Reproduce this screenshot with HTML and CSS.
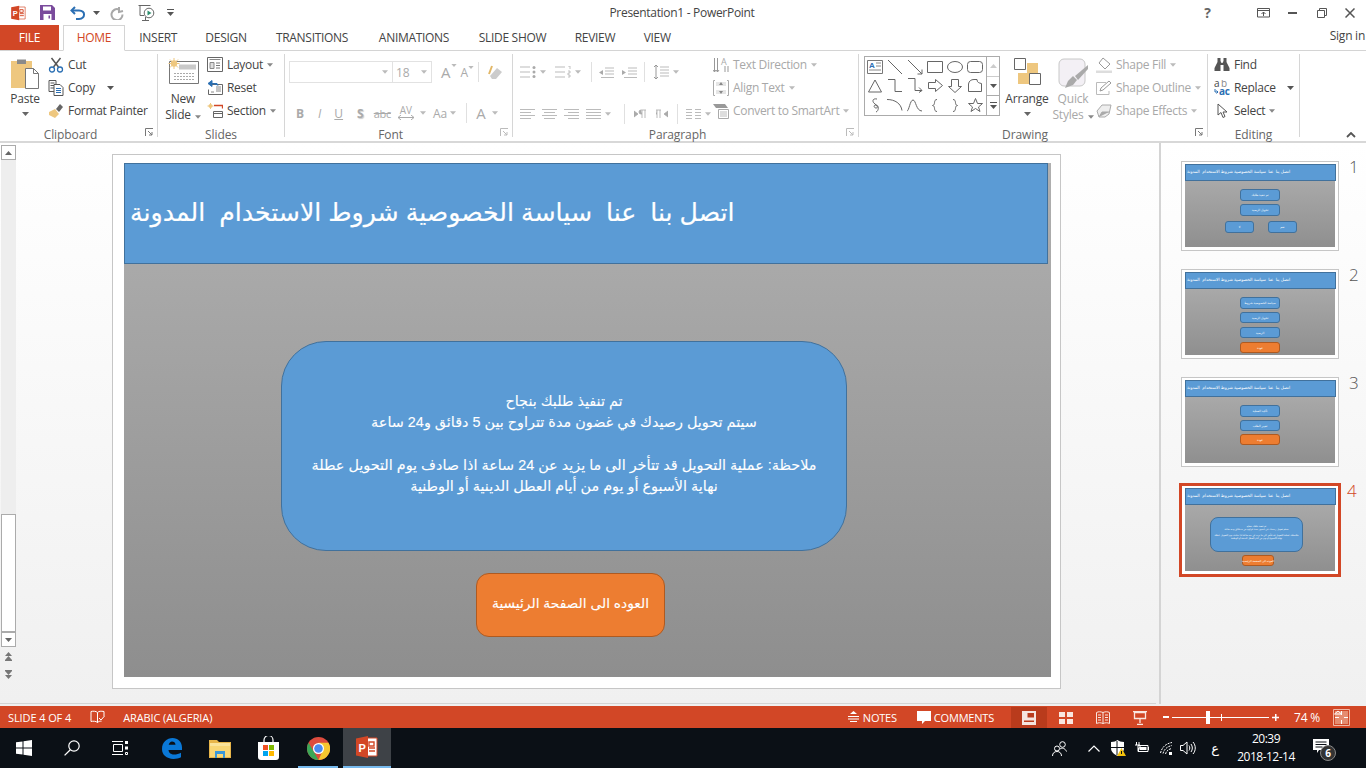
FILE: index.html
```html
<!DOCTYPE html>
<html lang="en">
<head>
<meta charset="utf-8">
<title>Presentation1 - PowerPoint</title>
<link rel="stylesheet" href="styles.css">
</head>
<body>
<svg class="defs" width="0" height="0">
  <symbol id="caret" viewBox="0 0 7 4"><path d="M0 0h7L3.500 4z" fill="currentColor"/></symbol>
  <symbol id="launch" viewBox="0 0 9 9"><path d="M.5 8V.5H8M3 3l4 4M7 4v3H4" fill="none" stroke="currentColor"/></symbol>
  <symbol id="ppt" viewBox="0 0 24 24"><path d="M11 3h11v18H11z" fill="#fff" stroke="#d24726"/><path d="M14 7h5v4h-5zM14 13h6M14 16h6" fill="none" stroke="#d24726" stroke-width="1.400"/><path d="M1 3.500 13 1v22L1 20.500z" fill="#d24726"/><text x="3.500" y="16.500" class="ptext">P</text></symbol>
</svg>
<div class="window">
  <header class="titlebar">
    <div class="qat">
      <svg class="q-logo" width="17" height="16" viewBox="0 0 24 24"><use href="#ppt"/></svg>
      <svg class="q-save" width="15" height="15" viewBox="0 0 15 15"><path d="M0 0h12l3 3v12H0z" fill="#7a4b9c"/><path d="M3 1.500h8v4H3z" fill="#fff"/><path d="M3.500 9h8v6h-8z" fill="#fff"/><path d="M8.500 10.500h1.500v3H8.500z" fill="#7a4b9c"/></svg>
      <svg class="q-undo" width="16" height="14" viewBox="0 0 16 14"><path d="M5 1 1.500 4.500 5 8" fill="none" stroke="#2b6fb3" stroke-width="2"/><path d="M2 4.500h7c7 0 6.500 8 0 8.500H6" fill="none" stroke="#2b6fb3" stroke-width="2"/></svg>
      <svg class="q-caret1 c-dark" width="7" height="4"><use href="#caret"/></svg>
      <svg class="q-redo" width="14" height="14" viewBox="0 0 14 14"><path d="M9 1v5l4-1M9 3.500a5.500 5.500 0 1 0 3.500 5" fill="none" stroke="#a8a8a8" stroke-width="2"/></svg>
      <svg class="q-show" width="17" height="17" viewBox="0 0 17 17"><path d="M.5 1.500h12M2 1.500v10h4M4 16.500h7M7.500 13v3.500" fill="none" stroke="#666"/><circle cx="11" cy="9" r="4.800" fill="#fff" stroke="#666"/><path d="M9.500 6.500v5l4-2.500z" fill="#2f8f6f"/></svg>
      <svg class="q-custom" width="7" height="7" viewBox="0 0 7 7"><path d="M0 0h7v1H0zM0 3h7L3.500 7z" fill="#555"/></svg>
    </div>
    <div class="doc-title">Presentation1 - PowerPoint</div>
    <div class="winctl">
      <span class="help">?</span>
      <svg width="13" height="10" viewBox="0 0 13 10"><path d="M.5.500h12v8.500H.5zM.5 2.500h12M6.500 8V4M4.500 6l2-2 2 2" fill="none" stroke="#555"/></svg>
      <svg class="w-min" width="9" height="2" viewBox="0 0 9 2"><path d="M0 0h9v2H0z" fill="#555"/></svg>
      <svg width="10" height="10" viewBox="0 0 10 10"><path d="M.5 2.500h7v7h-7zM2.500 2.500V.5h7v7h-2" fill="none" stroke="#555"/></svg>
      <svg width="10" height="10" viewBox="0 0 10 10"><path d="M.5.500l9 9M9.500.500l-9 9" fill="none" stroke="#555" stroke-width="1.500"/></svg>
    </div>
  </header>

  <nav class="tabs">
    <div class="tabgrid">
      <div class="tab file">FILE</div>
      <div class="tab active">HOME</div>
      <div class="tab">INSERT</div>
      <div class="tab">DESIGN</div>
      <div class="tab">TRANSITIONS</div>
      <div class="tab">ANIMATIONS</div>
      <div class="tab">SLIDE SHOW</div>
      <div class="tab">REVIEW</div>
      <div class="tab">VIEW</div>
    </div>
    <div class="signin">Sign in</div>
  </nav>

  <section class="ribbon">
    <div class="group g-clip">
      <div class="gbody">
        <div class="big big-paste">
          <svg width="30" height="31" viewBox="0 0 30 31"><path d="M1 3h21v27H1z" fill="#eec77f"/><path d="M7 1.500h9V6H7z" fill="#8a8a8a"/><path d="M15.500 10.500h8l5 5v15h-13z" fill="#fff" stroke="#777"/><path d="M23.500 10.500v5h5" fill="none" stroke="#777"/></svg>
          <span class="biglabel">Paste</span>
          <svg class="bigcaret" width="7" height="4"><use href="#caret"/></svg>
        </div>
        <div class="col col-clip">
          <div class="row"><svg class="ico" width="15" height="16" viewBox="0 0 15 16"><path d="M3 1l7 9M12 1 5 10" stroke="#555" stroke-width="1.500" fill="none"/><circle cx="3.500" cy="12.500" r="2.500" fill="none" stroke="#2b6fb3" stroke-width="1.300"/><circle cx="11.500" cy="12.500" r="2.500" fill="none" stroke="#2b6fb3" stroke-width="1.300"/></svg><span>Cut</span></div>
          <div class="row"><svg class="ico" width="15" height="16" viewBox="0 0 15 16"><path d="M.5.500h7v11h-7zM2 3h4M2 5.500h4M2 8h4" fill="none" stroke="#555"/><path d="M5.500 4.500h6l3 3v8h-9z" fill="#fff" stroke="#555"/><path d="M7.500 8.500h5M7.500 10.500h5M7.500 12.500h5" stroke="#2b6fb3"/></svg><span>Copy</span><svg class="car c-dark car-copy" width="7" height="4"><use href="#caret"/></svg></div>
          <div class="row"><svg class="ico" width="16" height="16" viewBox="0 0 16 16"><path d="M1 9l6-3 4 5-4 4-6-3z" fill="#eec77f"/><path d="M8 6l4-5 3 3-4 5z" fill="#666"/></svg><span>Format Painter</span></div>
        </div>
      </div>
      <div class="glabel">Clipboard</div>
      <svg class="launcher" width="9" height="9"><use href="#launch"/></svg>
    </div>

    <div class="group g-slides">
      <div class="gbody">
        <div class="big big-new">
          <svg width="31" height="27" viewBox="0 0 31 27"><path d="M1.500 3.500h29v22h-29z" fill="#fff" stroke="#777"/><path d="M11 6.500h17v5H11z" fill="#c9c9c9"/><path d="M6 15.500h20M6 18.500h20M6 21.500h20" stroke="#aaa" stroke-dasharray="2 1"/><circle cx="6" cy="5.500" r="3.200" fill="#eec77f"/><path d="M6 0v11M.5 5.500h11M2 1.500l8 8M10 1.500l-8 8" stroke="#eec77f"/></svg>
          <span class="biglabel">New</span>
          <span class="biglabel l2">Slide<svg class="car" width="6" height="4"><use href="#caret"/></svg></span>
        </div>
        <div class="col col-slides">
          <div class="row"><svg class="ico" width="16" height="15" viewBox="0 0 16 15"><path d="M.5.500h15v14H.5z" fill="#fff" stroke="#666"/><path d="M2.500 2.500h11M3 5.500h4v6H3z" stroke="#888" fill="#ddd"/><path d="M9 6h4M9 8.500h4M9 11h4" stroke="#777"/></svg><span>Layout</span><svg class="car" width="6" height="4"><use href="#caret"/></svg></div>
          <div class="row"><svg class="ico" width="16" height="15" viewBox="0 0 16 15"><path d="M3.500 4.500h12v10h-14v-5" fill="#fff" stroke="#666"/><path d="M9 7h5M9 9h5M9 11h5M4 12h3" stroke="#888"/><path d="M5 .5 1 3.500l4 3zM4 3.500h6l1 2" fill="#2b6fb3" stroke="#2b6fb3"/></svg><span>Reset</span></div>
          <div class="row"><svg class="ico" width="16" height="15" viewBox="0 0 16 15"><circle cx="3.500" cy="3" r="2" fill="#eec77f"/><path d="M3.500 0v6M.5 3h6" stroke="#eec77f"/><path d="M7 2.500h8.500v3" fill="none" stroke="#d24726" stroke-width="1.300"/><path d="M6.500 8.500h9v6h-9zM6.500 10.500h9" fill="#fff" stroke="#666"/></svg><span>Section</span><svg class="car" width="6" height="4"><use href="#caret"/></svg></div>
        </div>
      </div>
      <div class="glabel">Slides</div>
    </div>

    <div class="group g-font dis">
      <div class="gbody stack">
        <div class="fontrow">
          <div class="select s-font"><svg class="car" width="6" height="4"><use href="#caret"/></svg></div>
          <div class="select s-size"><span>18</span><svg class="car" width="6" height="4"><use href="#caret"/></svg></div>
          <span class="ga big-a">A<svg class="tinyc" width="6" height="3"><use href="#caret"/></svg></span>
          <span class="ga small-a">A<svg class="tinyc" width="6" height="3"><use href="#caret"/></svg></span>
          <i class="vsep v1"></i>
          <svg class="eraser" width="15" height="15" viewBox="0 0 15 15"><path d="M2 11 9 3l5 4-6 7H4z" fill="#ccc"/><path d="M4 1 1 9" stroke="#e2b766" stroke-width="2"/></svg>
        </div>
        <div class="fontrow lower">
          <b class="fb f-b">B</b><i class="fb f-i">I</i><u class="fb f-u">U</u><b class="fb f-s">S</b><s class="fb f-abc">abc</s>
          <span class="fb f-av">AV<svg width="16" height="5" viewBox="0 0 16 5"><path d="M0 2.500h16M3 0 0 2.500 3 5M13 0l3 2.500L13 5" fill="none" stroke="currentColor"/></svg></span>
          <svg class="car c-av" width="6" height="4"><use href="#caret"/></svg>
          <span class="fb f-aa">Aa</span><svg class="car c-aa" width="6" height="4"><use href="#caret"/></svg>
          <i class="vsep v2"></i>
          <span class="fb f-a">A</span><svg class="car c-a" width="6" height="4"><use href="#caret"/></svg>
        </div>
      </div>
      <div class="glabel">Font</div>
      <svg class="launcher" width="9" height="9"><use href="#launch"/></svg>
    </div>

    <div class="group g-para dis">
      <div class="gbody">
        <div class="stack para-left">
          <div class="pararow">
            <svg class="p1" width="16" height="12" viewBox="0 0 16 12"><path d="M0 1h10M0 6h10M0 11h10" stroke="#bbb"/><circle cx="14" cy="1.500" r="1.500" fill="#aaa"/><circle cx="14" cy="6" r="1.500" fill="#aaa"/><circle cx="14" cy="10.500" r="1.500" fill="#aaa"/></svg>
            <svg class="car" width="6" height="4"><use href="#caret"/></svg>
            <svg class="p2" width="16" height="12" viewBox="0 0 16 12"><path d="M0 1h10M0 6h10M0 11h10" stroke="#bbb"/><path d="M13 0h2v3M13 5h2v2h-2v2M13 9h2v2h-2" fill="none" stroke="#aaa" stroke-width=".7"/></svg>
            <svg class="car" width="6" height="4"><use href="#caret"/></svg>
            <i class="vsep v3"></i>
            <svg class="p3" width="15" height="11" viewBox="0 0 15 11"><path d="M6 1h9M6 4h9M6 7h9M2 10.500h13" stroke="#bbb"/><path d="M4 3 0 5.500 4 8z" fill="#aaa"/></svg>
            <svg class="p4" width="15" height="11" viewBox="0 0 15 11"><path d="M6 1h9M6 4h9M6 7h9M2 10.500h13" stroke="#bbb"/><path d="M0 3l4 2.500L0 8z" fill="#aaa"/></svg>
            <i class="vsep v4"></i>
            <svg class="p5" width="16" height="16" viewBox="0 0 16 16"><path d="M7 3h9M7 6h9M7 9h9M7 12h9" stroke="#bbb"/><path d="M3 1v14M1 3l2-2 2 2M1 13l2 2 2-2" fill="none" stroke="#999"/></svg>
            <svg class="car" width="6" height="4"><use href="#caret"/></svg>
          </div>
          <div class="pararow lower">
            <svg class="al" width="15" height="11" viewBox="0 0 15 11"><path d="M0 .5h15M0 3.500h11M0 6.500h15M0 9.500h11" stroke="#bbb"/></svg>
            <svg class="al" width="15" height="11" viewBox="0 0 15 11"><path d="M0 .5h15M2 3.500h11M0 6.500h15M2 9.500h11" stroke="#bbb"/></svg>
            <svg class="al" width="15" height="11" viewBox="0 0 15 11"><path d="M0 .5h15M4 3.500h11M0 6.500h15M4 9.500h11" stroke="#bbb"/></svg>
            <svg class="al" width="15" height="11" viewBox="0 0 15 11"><path d="M0 .5h15M0 3.500h15M0 6.500h15M0 9.500h15" stroke="#bbb"/></svg>
            <svg class="car" width="6" height="4"><use href="#caret"/></svg>
            <i class="vsep v5"></i>
            <svg class="rt" width="12" height="10" viewBox="0 0 12 10"><path d="M0 2l4 3-4 3zM7 1h5M8 1v8M11 1v8M7 1a2 2 0 0 0 0 4h1" fill="#aaa" stroke="#aaa" stroke-width=".8"/></svg>
            <svg class="lt" width="12" height="10" viewBox="0 0 12 10"><path d="M12 2 8 5l4 3zM0 1h5M1 1v8M4 1v8M0 1a2 2 0 0 0 0 4h1" fill="#aaa" stroke="#aaa" stroke-width=".8"/></svg>
            <i class="vsep v6"></i>
            <svg class="cols" width="15" height="11" viewBox="0 0 15 11"><path d="M0 .5h6M9 .5h6M0 3.500h6M9 3.500h6M0 6.500h6M9 6.500h6M0 9.500h6M9 9.500h6" stroke="#bbb"/></svg>
            <svg class="car" width="6" height="4"><use href="#caret"/></svg>
          </div>
        </div>
        <div class="col col-text">
          <div class="row"><svg class="ico" width="16" height="16" viewBox="0 0 16 16"><path d="M1.500 1v14M4.500 1v14M12 9v6M15 9v6M0 13l1.500 2L3 13M3 13l1.500 2L6 13" fill="none" stroke="#999"/><text x="8" y="8" class="tx">A</text></svg><span>Text Direction</span><svg class="car" width="6" height="4"><use href="#caret"/></svg></div>
          <div class="row"><svg class="ico" width="16" height="16" viewBox="0 0 16 16"><path d="M2 .5H.5v15H2M14 .5h1.500v15H14" fill="none" stroke="#aaa"/><path d="M3 3h10M3 5h10M3 11h10M3 13h10" stroke="#ccc"/><path d="M8 2l2 3H6zM8 14l2-3H6z" fill="#888"/></svg><span>Align Text</span><svg class="car" width="6" height="4"><use href="#caret"/></svg></div>
          <div class="row"><svg class="ico" width="16" height="16" viewBox="0 0 16 16"><path d="M0 1h12l3 4H3z" fill="#999"/><path d="M5.500 6.500h10v9h-10z" fill="#fff" stroke="#aaa"/><path d="M7 9h7M7 11h7M7 13h7" stroke="#bbb"/></svg><span>Convert to SmartArt</span><svg class="car" width="6" height="4"><use href="#caret"/></svg></div>
        </div>
      </div>
      <div class="glabel">Paragraph</div>
      <svg class="launcher" width="9" height="9"><use href="#launch"/></svg>
    </div>

    <div class="group g-draw">
      <div class="gbody">
        <div class="gallery">
          <div class="shapes">
            <svg width="16" height="14" viewBox="0 0 16 14"><path d="M.5.500h15v13H.5z" fill="#fff" stroke="#777"/><text x="2" y="7.500" class="sa">A</text><path d="M9 3h5M9 6h5M2 10h12" stroke="#888"/></svg>
            <svg width="16" height="16" viewBox="0 0 16 16"><path d="M1 1l14 14" stroke="#666"/></svg>
            <svg width="16" height="16" viewBox="0 0 16 16"><path d="M1 1l14 14M10.500 15H15v-4.500" fill="none" stroke="#666"/></svg>
            <svg width="16" height="12" viewBox="0 0 16 12"><path d="M.5.500h15v11H.5z" fill="none" stroke="#666"/></svg>
            <svg width="16" height="12" viewBox="0 0 16 12"><ellipse cx="8" cy="6" rx="7.500" ry="5.500" fill="none" stroke="#666"/></svg>
            <svg width="16" height="12" viewBox="0 0 16 12"><rect x=".5" y=".5" width="15" height="11" rx="3" fill="none" stroke="#666"/></svg>
            <svg width="14" height="14" viewBox="0 0 14 14"><path d="M7 1l6.500 12H.5z" fill="none" stroke="#666"/></svg>
            <svg width="16" height="13" viewBox="0 0 16 13"><path d="M1 .5h7v12h7" fill="none" stroke="#666"/></svg>
            <svg width="16" height="15" viewBox="0 0 16 15"><path d="M1 .5h7v12h7M12 9.500l3 3-3 2" fill="none" stroke="#666"/></svg>
            <svg width="15" height="13" viewBox="0 0 15 13"><path d="M.5 3.500h7V.5l7 6-7 6v-3h-7z" fill="none" stroke="#666"/></svg>
            <svg width="14" height="14" viewBox="0 0 14 14"><path d="M3.500.5h7v7h3L7 13.500.5 7.500h3z" fill="none" stroke="#666"/></svg>
            <svg width="14" height="13" viewBox="0 0 14 13"><path d="M.5 5C1 2 3 .5 6 .5h3c0 3 2 3.500 4.500 4v8H.5z" fill="none" stroke="#666"/></svg>
            <svg width="9" height="15" viewBox="0 0 9 15"><path d="M6 1C1 0 1 4 4 6s3 4 1 4-3-3 0-3 3 6 0 7" fill="none" stroke="#666"/></svg>
            <svg width="16" height="12" viewBox="0 0 16 12"><path d="M0 .5c8 0 14 4 15 11" fill="none" stroke="#666"/></svg>
            <svg width="16" height="13" viewBox="0 0 16 13"><path d="M0 12C2 12 3 1 6 1s3 11 9 11" fill="none" stroke="#666"/></svg>
            <svg width="6" height="13" viewBox="0 0 6 13"><path d="M5 .5C1 .5 4 6 .5 6.500 4 7 1 12.500 5 12.500" fill="none" stroke="#666"/></svg>
            <svg width="6" height="13" viewBox="0 0 6 13"><path d="M1 .5C5 .5 2 6 5.500 6.500 2 7 5 12.500 1 12.500" fill="none" stroke="#666"/></svg>
            <svg width="15" height="14" viewBox="0 0 15 14"><path d="M7.500.5l2 5h5l-4 3.500 1.500 4.500-4.500-3-4.500 3L4.500 9l-4-3.500h5z" fill="none" stroke="#666"/></svg>
          </div>
          <div class="gscroll">
            <span class="gs off"><svg width="7" height="4" viewBox="0 0 7 4"><path d="M3.500 0 7 4H0z" fill="#ccc"/></svg></span>
            <span class="gs"><svg width="7" height="4"><use href="#caret"/></svg></span>
            <span class="gs"><svg width="7" height="7" viewBox="0 0 7 7"><path d="M0 0h7v1H0zM0 3h7L3.500 7z" fill="#555"/></svg></span>
          </div>
        </div>
        <div class="big big-arr">
          <svg width="27" height="27" viewBox="0 0 27 27"><path d="M13 5h11v11H13zM4 15h11v11H4z" fill="#eec77f"/><path d="M.5.500h11v11H.5zM15.500 15.500h11v11h-11z" fill="#fff" stroke="#666"/></svg>
          <span class="biglabel">Arrange</span>
          <svg class="bigcaret" width="7" height="4"><use href="#caret"/></svg>
        </div>
        <div class="big big-qs">
          <svg width="31" height="31" viewBox="0 0 31 31"><rect x="1" y="1" width="26" height="27" rx="5" fill="#f3f0f5" stroke="#c8c8c8"/><path d="M10 23l5-5 4 4-4 5-8 3z" fill="#aaa"/><path d="M17 18 30 7v4L20 22z" fill="#aaa"/></svg>
          <span class="biglabel">Quick</span>
          <span class="biglabel l2">Styles<svg class="car" width="6" height="4"><use href="#caret"/></svg></span>
        </div>
        <div class="col col-shape dis">
          <div class="row"><svg class="ico" width="16" height="16" viewBox="0 0 16 16"><path d="M7 1l7 6-5 5-6-6z" fill="#fff" stroke="#999"/><path d="M0 13.500h16V16H0z" fill="#ddd"/></svg><span>Shape Fill</span><svg class="car" width="6" height="4"><use href="#caret"/></svg></div>
          <div class="row"><svg class="ico" width="16" height="16" viewBox="0 0 16 16"><path d="M13 11v3.500H.5v-12H10" fill="none" stroke="#bbb"/><path d="M4 11l1-3 8-7 2 2-8 7z" fill="#fff" stroke="#999"/></svg><span>Shape Outline</span><svg class="car" width="6" height="4"><use href="#caret"/></svg></div>
          <div class="row"><svg class="ico" width="16" height="16" viewBox="0 0 16 16"><path d="M1 8l5-6h9l-2 9-4 3H3z" fill="#eee" stroke="#aaa"/><path d="M3 14l3-5h7" fill="#aaa" stroke="#aaa"/></svg><span>Shape Effects</span><svg class="car" width="6" height="4"><use href="#caret"/></svg></div>
        </div>
      </div>
      <div class="glabel">Drawing</div>
      <svg class="launcher" width="9" height="9"><use href="#launch"/></svg>
    </div>

    <div class="group g-edit">
      <div class="gbody">
        <div class="col col-edit">
          <div class="row"><svg class="ico" width="15" height="15" viewBox="0 0 15 15"><path d="M3 1h3v3l1 2h1l1-2V1h3v4l3 6v3H9V8H6v6H0v-3l3-6z" fill="#555"/></svg><span>Find</span></div>
          <div class="row"><svg class="ico" width="16" height="16" viewBox="0 0 16 16"><text x="0" y="7" class="rp">a</text><text x="7" y="7" class="rp g">b</text><text x="5" y="15" class="rp b">ac</text><path d="M1 9v3h3M2.500 10.500 4 12l-1.500 1.500" fill="none" stroke="#2b6fb3"/></svg><span>Replace</span><svg class="car c-dark car-rep" width="7" height="4"><use href="#caret"/></svg></div>
          <div class="row"><svg class="ico" width="15" height="16" viewBox="0 0 15 16"><path d="M3.500 1v11l3-2.500 2 5 2-1-2-4.500h4z" fill="#fff" stroke="#555"/></svg><span>Select</span><svg class="car" width="6" height="4"><use href="#caret"/></svg></div>
        </div>
      </div>
      <div class="glabel">Editing</div>
    </div>
    <svg class="collapse" width="10" height="6" viewBox="0 0 10 6"><path d="M1 5l4-4 4 4" fill="none" stroke="#555" stroke-width="1.800"/></svg>
  </section>

  <main class="workspace">
    <div class="edit-pane">
      <div class="vscroll">
        <div class="sb-btn"><svg width="7" height="4" viewBox="0 0 7 4"><path d="M3.500 0 7 4H0z" fill="#666"/></svg></div>
        <div class="sb-track"></div>
        <div class="sb-thumb"></div>
        <div class="sb-btn"><svg width="7" height="4"><use href="#caret"/></svg></div>
        <div class="sb-page">
          <svg width="7" height="9" viewBox="0 0 7 9"><path d="M3.500 0 7 4H0zM3.500 4 7 8H0zM0 8h7v1H0z" fill="#777"/></svg>
          <svg width="7" height="9" viewBox="0 0 7 9"><path d="M0 0h7v1H0zM0 1h7L3.500 5zM0 5h7L3.500 9z" fill="#777"/></svg>
        </div>
      </div>
      <div class="stage">
        <div class="frame">
          <div class="slide">
            <div class="s-title" dir="ltr"><span dir="rtl">اتصل بنا&nbsp;&nbsp;عنا&nbsp;&nbsp;سياسة الخصوصية شروط الاستخدام&nbsp;&nbsp;المدونة</span></div>
            <div class="s-box" dir="rtl">
              <p>تم تنفيذ طلبك بنجاح</p>
              <p>سيتم تحويل رصيدك في غضون مدة تتراوح بين 5 دقائق و24 ساعة</p>
              <p class="empty">&nbsp;</p>
              <p>ملاحظة: عملية التحويل قد تتأخر الى ما يزيد عن 24 ساعة اذا صادف يوم التحويل عطلة</p>
              <p>نهاية الأسبوع أو يوم من أيام العطل الدينية أو الوطنية</p>
            </div>
            <div class="s-btn" dir="rtl">العوده الى الصفحة الرئيسية</div>
          </div>
        </div>
      </div>
      <div class="hline"></div>
    </div>
    <aside class="thumbs">
      <div class="tn-row">
        <div class="tn">
          <div class="tn-title" dir="rtl">اتصل بنا&nbsp;&nbsp;عنا&nbsp;&nbsp;سياسة الخصوصية شروط الاستخدام&nbsp;&nbsp;المدونة</div>
          <div class="tb blue tb-a" dir="rtl">تم تنفيذ طلبك</div>
          <div class="tb blue tb-b" dir="rtl">تحويل الرصيد</div>
          <div class="tb blue tb-c" dir="rtl">لا</div>
          <div class="tb blue tb-d" dir="rtl">نعم</div>
        </div>
        <span class="tn-num">1</span>
      </div>
      <div class="tn-row">
        <div class="tn">
          <div class="tn-title" dir="rtl">اتصل بنا&nbsp;&nbsp;عنا&nbsp;&nbsp;سياسة الخصوصية شروط الاستخدام&nbsp;&nbsp;المدونة</div>
          <div class="tb blue tb-e" dir="rtl">سياسة الخصوصية شروط</div>
          <div class="tb blue tb-f" dir="rtl">تحويل الرصيد</div>
          <div class="tb blue tb-g" dir="rtl">الرصيد</div>
          <div class="tb orange tb-h" dir="rtl">عودة</div>
        </div>
        <span class="tn-num">2</span>
      </div>
      <div class="tn-row">
        <div class="tn">
          <div class="tn-title" dir="rtl">اتصل بنا&nbsp;&nbsp;عنا&nbsp;&nbsp;سياسة الخصوصية شروط الاستخدام&nbsp;&nbsp;المدونة</div>
          <div class="tb blue tb-i" dir="rtl">تأكيد العملية</div>
          <div class="tb blue tb-j" dir="rtl">تغيير الطلب</div>
          <div class="tb orange tb-k" dir="rtl">عودة</div>
        </div>
        <span class="tn-num">3</span>
      </div>
      <div class="tn-row row-cur">
        <div class="tn current">
          <div class="tn-title" dir="rtl">اتصل بنا&nbsp;&nbsp;عنا&nbsp;&nbsp;سياسة الخصوصية شروط الاستخدام&nbsp;&nbsp;المدونة</div>
          <div class="tb blue tb-m" dir="rtl">تم تنفيذ طلبك بنجاح<br>سيتم تحويل رصيدك في غضون مدة تتراوح بين 5 دقائق و24 ساعة<br><br>ملاحظة: عملية التحويل قد تتأخر الى ما يزيد عن 24 ساعة اذا صادف يوم التحويل عطلة<br>نهاية الأسبوع أو يوم من أيام العطل الدينية أو الوطنية</div>
          <div class="tb orange tb-n" dir="rtl">العوده الى الصفحة الرئيسية</div>
        </div>
        <span class="tn-num cur">4</span>
      </div>
    </aside>
  </main>

  <div class="gapstrip"></div>

  <footer class="status">
    <span class="st-count">SLIDE 4 OF 4</span>
    <svg class="st-proof" width="15" height="14" viewBox="0 0 15 14"><path d="M7.500 2.500C6 1 3 1 1 1.500v10c2-.5 5-.5 6.500 1 1-1 2.500-1.500 4-1.300M7.500 2.500V12.500M7.500 2.500C9 1 11 1 14 1.500V6" fill="none" stroke="#fff"/><path d="M9 8l2 2 3.500-4" fill="none" stroke="#fff"/></svg>
    <span class="st-lang">ARABIC (ALGERIA)</span>
    <div class="st-right">
      <svg class="st-notes" width="11" height="12" viewBox="0 0 11 12"><path d="M5.500 0 9 3H2z" fill="#fff"/><path d="M0 5.500h11M0 8h11M2 10.500h7" stroke="#fff"/></svg>
      <span class="st-l1">NOTES</span>
      <svg class="st-comm" width="14" height="13" viewBox="0 0 14 13"><path d="M0 0h14v10H8l-3 3v-3H0z" fill="#fff"/></svg>
      <span class="st-l2">COMMENTS</span>
      <div class="views">
        <div class="view on"><svg width="14" height="14" viewBox="0 0 14 14"><path d="M0 0h14v14H0z" fill="#f5e4de"/><path d="M5.500 2H12v4.500H5.500z" fill="#b93b1c"/><path d="M2 9.500h10V11H2z" fill="#b93b1c"/></svg></div>
        <div class="view"><svg width="14" height="14" viewBox="0 0 14 14"><path d="M0 1h6v5H0zM8 1h6v5H8zM0 8h6v5H0zM8 8h6v5H8z" fill="#f9e6e0"/></svg></div>
        <div class="view"><svg width="14" height="14" viewBox="0 0 14 14"><path d="M.5 1.500c2-1 4-1 6.500 0 2.500-1 4.500-1 6.500 0v11c-2-1-4-1-6.500 0-2.500-1-4.500-1-6.500 0zM7 1.500v11M2 4h3M2 6.500h3M2 9h3M9 4h3M9 6.500h3M9 9h3" fill="none" stroke="#f9e6e0"/></svg></div>
        <div class="view"><svg width="14" height="14" viewBox="0 0 14 14"><path d="M0 .5h14M1.500 1.500h11v6h-11zM7 8v4M4 13.500h6" fill="none" stroke="#f9e6e0" stroke-width="1.300"/></svg></div>
      </div>
      <svg class="zm" width="6" height="2" viewBox="0 0 6 2"><path d="M0 0h6v2H0z" fill="#fff"/></svg>
      <div class="slider"><i class="tick"></i><i class="knob"></i></div>
      <svg class="zp" width="7" height="7" viewBox="0 0 7 7"><path d="M3 0h1.500v7H3zM0 2.800h7v1.500H0z" fill="#fff"/></svg>
      <span class="st-zoom">74 %</span>
      <svg class="st-fit" width="17" height="17" viewBox="0 0 17 17"><path d="M.5.500h16v16H.5z" fill="none" stroke="#f0b8a6"/><path d="M2 2h13v13H2z" fill="#e58c70"/><path d="M5 2l3.500 3h-7zM8.500 2v4M8.500 15v-4M2 8.500h4M15 8.500h-4" stroke="#fff" fill="none"/></svg>
    </div>
  </footer>

  <footer class="taskbar">
    <div class="tb-left">
      <div class="tk"><svg width="16" height="16" viewBox="0 0 16 16"><path d="M0 2.300 6.500 1.400V7.500H0zM7.500 1.200 16 0v7.500H7.500zM0 8.500h6.500v6.100L0 13.700zM7.500 8.500H16V16l-8.500-1.200z" fill="#fff"/></svg></div>
      <div class="tk"><svg width="16" height="16" viewBox="0 0 16 16"><circle cx="10" cy="6" r="5.200" fill="none" stroke="#fff" stroke-width="1.200"/><path d="M6.300 9.700.6 15.400" stroke="#fff" stroke-width="1.300"/></svg></div>
      <div class="tk"><svg width="16" height="16" viewBox="0 0 16 16"><path d="M1.500 4.500h9v7h-9zM0 1.500h11M0 14.500h11" fill="none" stroke="#fff"/><path d="M13 1h3v3h-3zM13 6.500h3v3h-3z" fill="#fff"/><path d="M13.500 12.500h2v2h-2z" fill="none" stroke="#fff"/></svg></div>
      <div class="tk"><svg width="21" height="21" viewBox="0 0 21 21"><path d="M1 11C1 4 6 0 11.500 0 17 0 21 4 21 9.500v2.500H7.500c.2 3 2.800 4.500 5.500 4.500 2.500 0 5-.6 7-1.800v4.600c-2 1.200-4.800 1.700-7.500 1.700C5.500 20.500 1 17 1 11zm6.700-4.300h6.800C14.400 4.500 12.800 3.500 11 3.500 9.500 3.500 8.200 5 7.700 6.700z" fill="#0a78d7"/></svg></div>
      <div class="tk"><svg width="22" height="19" viewBox="0 0 22 19"><path d="M0 1h8l2 2h12v16H0z" fill="#e8b64a"/><path d="M1 4h20v3H1z" fill="#fbe49a"/><path d="M1 7h20v11H1z" fill="#f9d775"/><path d="M6 12h10v7h-2v-4H8v4H6z" fill="#3a98d8"/></svg></div>
      <div class="tk"><svg width="23" height="24" viewBox="0 0 23 24"><path d="M1 6h21v15a3 3 0 0 1-3 3H4a3 3 0 0 1-3-3z" fill="#fff"/><path d="M7 7V4a4.500 4.500 0 0 1 9 0v3" fill="none" stroke="#fff" stroke-width="1.200"/><path d="M6 9h5v5H6z" fill="#f25022"/><path d="M12 9h5v5h-5z" fill="#7fba00"/><path d="M6 15h5v5H6z" fill="#00a4ef"/><path d="M12 15h5v5h-5z" fill="#ffb900"/></svg></div>
      <div class="tk tk-chrome"><svg width="23" height="23" viewBox="0 0 23 23"><circle cx="11.500" cy="11.500" r="11.500" fill="#dd4b3e"/><path d="M11.500 23A11.500 11.500 0 0 1 1.500 5.800L7 15l4.500 8z" fill="#3aa757"/><path d="M11.500 23a11.500 11.500 0 0 0 10-17.300H11.500L16 13l-4.500 10z" fill="#f7c62f"/><circle cx="11.500" cy="11.500" r="5.500" fill="#fff"/><circle cx="11.500" cy="11.500" r="4.300" fill="#4a8af0"/></svg></div>
      <div class="tk tk-ppt"><svg width="24" height="24" viewBox="0 0 24 24"><use href="#ppt"/></svg></div>
    </div>
    <div class="tray">
      <svg class="tr-p" width="15" height="15" viewBox="0 0 15 15"><circle cx="10.500" cy="3.500" r="2.800" fill="none" stroke="#fff"/><circle cx="5" cy="7.500" r="2.500" fill="none" stroke="#fff"/><path d="M.5 15c0-3 2-4.500 4.500-4.500S9.500 12 9.500 15M8 8c2-1.500 5-1 6.500 2.500" fill="none" stroke="#fff"/></svg>
      <svg class="tr-c" width="12" height="7" viewBox="0 0 12 7"><path d="M.5 6.500 6 1l5.500 5.500" fill="none" stroke="#fff" stroke-width="1.200"/></svg>
      <svg class="tr-s" width="15" height="16" viewBox="0 0 15 16"><path d="M6.500 0C5 1 3 2 0 2v6c0 4 3 6 6.500 8C10 14 13 12 13 8V2c-3 0-5-1-6.500-2z" fill="#fff"/><path d="M6 1v14M0 7.500h13" stroke="#0b1016"/><path d="M10.500 8 15 16H6z" fill="#f4c20d"/><path d="M10 11h1v3h-1z" fill="#111"/></svg>
      <svg class="tr-b" width="16" height="12" viewBox="0 0 16 12"><path d="M3.500 0v3M6 0v3M2 3h5v3H5.500v3" fill="none" stroke="#fff"/><path d="M5 3.500h10v6H5z" fill="none" stroke="#fff"/><path d="M6.500 5h7v3h-7zM15 5h1v3h-1z" fill="#fff"/></svg>
      <svg class="tr-w" width="13" height="13" viewBox="0 0 13 13"><path d="M.5 11C2 5 6 1.500 12 .5M3 11.500C4 7.500 7 4.500 12 3.500M5.500 12C6 9.500 8 7.500 11.500 6.500" fill="none" stroke="#fff" stroke-dasharray="2 1"/><path d="M9 10h3v3H9z" fill="#fff"/></svg>
      <svg class="tr-v" width="16" height="14" viewBox="0 0 16 14"><path d="M.5 4.500H3L7 1v12L3 9.500H.5z" fill="none" stroke="#fff"/><path d="M9 4.500c1 1.500 1 3.500 0 5M11 3c1.800 2.500 1.800 5.500 0 8M13 1c3 3.500 3 8.500 0 12" fill="none" stroke="#fff"/></svg>
      <span class="tr-ime">ع</span>
      <div class="clock"><span>20:39</span><span>2018-12-14</span></div>
      <div class="notif">
        <svg width="16" height="14" viewBox="0 0 16 14"><path d="M0 0h16v11H6l-2 3v-3H0z" fill="#fff"/><path d="M2.500 3h11M2.500 5.500h11M2.500 8h7" stroke="#0b1016"/></svg>
        <span class="badge">6</span>
      </div>
    </div>
  </footer>
</div>
</body>
</html>
```

FILE: styles.css
```css
* { box-sizing: border-box; }
html, body { margin: 0; padding: 0; }
body { width: 1366px; height: 768px; overflow: hidden; background: #fff; font-family: "Open Sans", "Noto Sans", sans-serif; font-size: 12px; color: #444; }
.defs { position: absolute; }
.ptext { font: bold 11px "Liberation Sans", sans-serif; fill: #fff; }
.window { width: 1366px; height: 768px; display: flex; flex-direction: column; }
.window > * { flex: none; }

.titlebar { height: 25px; display: flex; align-items: center; position: relative; background: #fff; }
.qat { display: flex; align-items: center; padding-left: 10px; }
.q-save { margin-left: 13px; }
.q-undo { margin-left: 15px; }
.q-caret1 { margin-left: 7px; }
.q-redo { margin-left: 10px; }
.q-show { margin-left: 14px; }
.q-custom { margin-left: 12px; }
.doc-title { position: absolute; left: 0; width: 1364px; text-align: center; top: 4px; font-size: 12px; color: #444; letter-spacing: -.3px; }
.winctl { margin-left: auto; display: flex; align-items: center; gap: 18px; padding-right: 11px; }
.help { font-weight: 700; font-size: 14px; color: #666; margin-right: 28px; }
.w-min { margin-right: 2px; }

.tabs { height: 25px; display: flex; align-items: stretch; }
.tabgrid { display: grid; grid-template-columns: 59px 66px 66.500px 69px 103px 101px 96px 69px 55.500px; }
.tab { display: flex; align-items: center; justify-content: center; font-size: 12px; letter-spacing: -.3px; color: #444; padding-bottom: 2px; }
.tab.file { background: #d24726; color: #fff; }
.tab.active { color: #d24726; background: #fff; border: 1px solid #d4d4d4; border-bottom: 1px solid #fff; margin-left: 4px; height: 26px; position: relative; z-index: 2; }
.signin { margin-left: auto; align-self: center; padding-right: 1px; font-size: 12px; letter-spacing: -.25px; color: #444; margin-top: -5px; }

.ribbon { height: 93px; display: flex; border-top: 1px solid #d4d4d4; border-bottom: 2px solid #d8d8d8; background: #fff; padding-top: 3px; position: relative; color: #444; }
.group { position: relative; border-right: 1px solid #d6d6d6; height: 83px; display: flex; flex-direction: column; flex: none; }
.g-clip { width: 158px; } .g-slides { width: 127px; } .g-font { width: 228px; } .g-para { width: 346px; } .g-draw { width: 349px; } .g-edit { width: 92px; }
.gbody { display: flex; height: 70px; flex: none; }
.glabel { text-align: center; font-size: 12px; color: #666; letter-spacing: -.1px; line-height: 16px; margin-top: 3px; }
.g-clip .glabel, .g-font .glabel, .g-para .glabel, .g-draw .glabel { padding-right: 16px; }
.launcher { position: absolute; right: 3px; bottom: 0; color: #777; }
.g-para .launcher, .g-font .launcher { color: #bbb; }
.car { color: #888; margin-left: 4px; flex: none; }
.dis .car { color: #bbb; }
.c-dark { color: #555; }
.col { display: flex; flex-direction: column; margin-top: -1px; }
.row { height: 23px; display: flex; align-items: center; white-space: nowrap; letter-spacing: -.3px; }
.row .ico { width: 16px; margin-right: 4px; flex: none; }
.dis .row { color: #a8a8a8; }
.g-font .gbody, .g-para .gbody { color: #aaa; }

.big { display: flex; flex-direction: column; align-items: center; flex: none; }
.big > svg:first-child { margin-top: 4px; flex: none; }
.biglabel { line-height: 16px; letter-spacing: -.2px; white-space: nowrap; margin-top: 2px; }
.biglabel.l2 { margin-top: 0; }
.big-new .biglabel:not(.l2), .big-arr .biglabel { margin-top: 6px; }
.bigcaret { margin-top: 5px; color: #666; flex: none; }
.big-paste { width: 38px; margin-left: 6px; }
.col-clip { margin-left: 4px; }
.car-copy { margin-left: 12px; }
.big-new { width: 40px; margin-left: 5px; }
.col-slides { margin-left: 4px; }

.g-font .stack { padding: 7px 0 0 4px; display: flex; flex-direction: column; }
.fontrow { display: flex; align-items: center; height: 22px; flex: none; }
.fontrow.lower { margin-top: 20px; height: 20px; }
.select { border: 1px solid #e2e2e2; height: 22px; display: flex; align-items: center; justify-content: flex-end; padding-right: 4px; }
.select .car { margin-left: 0; }
.s-font { width: 104px; }
.s-size { width: 39px; justify-content: space-between; padding-left: 3px; border-left: 0; color: #aaa; }
.ga { display: inline-flex; color: #aaa; }
.big-a { font-size: 15px; margin-left: 9px; }
.small-a { font-size: 12px; margin-left: 4px; }
.tinyc { color: #bbb; margin-top: 2px; }
.vsep { display: block; width: 1px; height: 20px; background: #e0e0e0; flex: none; }
.v1 { margin-left: 4px; }
.eraser { margin-left: 9px; }
.fb { font: normal 12px "Open Sans", sans-serif; color: #aaa; display: inline-block; }
b.fb { font-weight: 700; }
i.fb { font-style: italic; }
.f-b { margin-left: 7px; }
.f-i { margin-left: 14px; }
.f-u { margin-left: 13px; }
.f-s { margin-left: 14px; text-shadow: 1px 1px 1px #ccc; }
.f-abc { margin-left: 10px; font-size: 11px; letter-spacing: -.3px; }
.f-av { margin-left: 7px; font-size: 10px; line-height: 9px; display: inline-flex; flex-direction: column; align-items: center; }
.c-av { margin-left: 6px; }
.f-aa { margin-left: 7px; font-size: 12px; }
.c-aa { margin-left: 3px; }
.v2 { margin-left: 10px; }
.f-a { margin-left: 9px; font-size: 15px; }
.c-a { margin-left: 6px; }

.para-left { display: flex; flex-direction: column; padding: 8px 0 0 7px; width: 200px; flex: none; }
.pararow { display: flex; align-items: center; height: 20px; flex: none; }
.pararow.lower { margin-top: 22px; }
.p2 { margin-left: 9px; }
.v3 { margin-left: 10px; }
.p3 { margin-left: 7px; } .p4 { margin-left: 8px; }
.v4 { margin-left: 7px; }
.p5 { margin-left: 8px; }
.pararow .al { margin-right: 7px; flex: none; }
.pararow .al:nth-child(4) { margin-right: 0; }
.v5 { margin-left: 13px; }
.rt { margin-left: 9px; } .lt { margin-left: 10px; }
.v6 { margin-left: 9px; }
.cols { margin-left: 8px; }

.gallery { display: flex; width: 136px; height: 60px; border: 1px solid #ababab; margin: 2px 0 0 5px; flex: none; }
.shapes { display: grid; grid-template-columns: repeat(6, 20px); grid-template-rows: repeat(3, 19.300px); width: 122px; place-items: center; border-right: 1px solid #ababab; }
.sa { font: bold 8px "Liberation Sans", sans-serif; fill: #2b6fb3; }
.gscroll { display: flex; flex-direction: column; flex: 1; }
.gs { flex: 1; display: flex; align-items: center; justify-content: center; border-bottom: 1px solid #ababab; color: #555; }
.gs:last-child { border-bottom: 0; }
.gs.off { border-bottom: 1px solid #ccc; }
.big-arr { width: 46px; margin-left: 4px; }
.big-qs { width: 40px; margin-left: 3px; color: #a8a8a8; }
.col-shape { margin-left: 3px; }
.col-edit { margin-left: 6px; }
.rp { font: 10px "Open Sans", sans-serif; fill: #444; }
.rp.g { fill: #888; } .rp.b { fill: #2b6fb3; font-weight: 700; }
.car-rep { margin-left: 11px; }
.tx { font: 9px "Open Sans", sans-serif; fill: #aaa; }
.collapse { position: absolute; left: 1346px; top: 81px; }

.workspace { height: 561px; display: flex; background: linear-gradient(#fff 0, #f0f0f0 100%); }
.edit-pane { width: 1159px; position: relative; display: flex; flex: none; }
.vscroll { width: 15px; margin: 2px 0 0 1px; display: flex; flex-direction: column; flex: none; }
.sb-btn { height: 15px; border: 1px solid #ababab; background: #fff; display: flex; align-items: center; justify-content: center; color: #666; flex: none; }
.sb-track { height: 354px; background: #eee; flex: none; }
.sb-thumb { height: 118px; border: 1px solid #ababab; background: #fff; flex: none; }
.sb-page { display: flex; flex-direction: column; align-items: center; gap: 9px; padding-top: 5px; }
.stage { flex: 1; padding: 11px 0 0 96px; }
.frame { width: 949px; height: 535px; background: #fff; border: 1px solid #c6c6c6; padding: 8px 0 0 11px; }
.slide { width: 927px; height: 514px; position: relative; background: linear-gradient(#b0b0b0, #8e8e8e); }
.s-title { position: absolute; left: 0; top: 0; width: 924px; height: 101px; background: #5b9bd5; border: 1px solid #41719c; color: #fff; font: 25.200px "Liberation Sans", "DejaVu Sans", sans-serif; -webkit-text-stroke: .2px #fff; display: flex; align-items: center; padding: 0 0 3px 5px; white-space: nowrap; }
.s-box { position: absolute; left: 157px; top: 178px; width: 566px; height: 210px; border-radius: 45px; background: #5b9bd5; border: 1px solid #41719c; color: #fff; font: 14.400px/21.300px "Liberation Sans", "DejaVu Sans", sans-serif; -webkit-text-stroke: .1px #fff; text-align: center; padding-top: 49px; }
.s-box p { margin: 0; white-space: nowrap; }
.s-btn { position: absolute; left: 352px; top: 410px; width: 189px; height: 64px; border-radius: 13px; background: #ed7d31; border: 1px solid #ae5a21; color: #fff; font: 13.800px "Liberation Sans", "DejaVu Sans", sans-serif; -webkit-text-stroke: .1px #fff; display: flex; align-items: center; justify-content: center; white-space: nowrap; padding-bottom: 4px; }
.hline { position: absolute; left: 0; bottom: 0; width: 1156px; height: 1px; background: #d4d4d4; }

.thumbs { flex: 1; border-left: 2px solid #d4d4d4; padding: 18px 0 0 20px; }
.tn-row { display: flex; align-items: flex-start; }
.tn-row + .tn-row { margin-top: 18px; }
.tn-row.row-cur { margin: 16px 0 0 -2px; }
.tn { width: 158px; height: 90px; border: 1px solid #c6c6c6; background: linear-gradient(#b0b0b0, #8e8e8e) padding-box; position: relative; flex: none; box-shadow: inset 0 0 0 2px #fff; outline: 3px solid #fff; outline-offset: -4px; }
.tn.current { width: 162px; height: 94px; border: 3px solid #d24726; outline: none; box-shadow: inset 0 0 0 3px #fff; background: linear-gradient(#b0b0b0, #8e8e8e); }
.tn-title { position: absolute; left: 3px; top: 2px; width: 151px; height: 17px; background: #5b9bd5; border: 1px solid #41719c; color: #fff; font: 4.300px/14px "Liberation Sans", "DejaVu Sans", sans-serif; text-align: left; padding-left: 1px; white-space: nowrap; direction: ltr; unicode-bidi: plaintext; }
.tb { position: absolute; color: #fff; font: 3px "Liberation Sans", "DejaVu Sans", sans-serif; text-align: center; display: flex; align-items: center; justify-content: center; border-radius: 3px; white-space: nowrap; }
.blue { background: #5b9bd5; border: 1px solid #41719c; }
.orange { background: #ed7d31; border: 1px solid #ae5a21; }
.tb-a { left: 58px; top: 27px; width: 40px; height: 12px; }
.tb-b { left: 58px; top: 42px; width: 40px; height: 12px; }
.tb-c { left: 43px; top: 59px; width: 29px; height: 12px; }
.tb-d { left: 86px; top: 59px; width: 29px; height: 12px; }
.tb-e { left: 58px; top: 27px; width: 40px; height: 12px; }
.tb-f { left: 58px; top: 42px; width: 40px; height: 11px; }
.tb-g { left: 58px; top: 57px; width: 40px; height: 11px; }
.tb-h { left: 58px; top: 72px; width: 40px; height: 11px; }
.tb-i { left: 58px; top: 27px; width: 40px; height: 12px; }
.tb-j { left: 58px; top: 42px; width: 40px; height: 11px; }
.tb-k { left: 58px; top: 56px; width: 40px; height: 11px; }
.tb-m { left: 28px; top: 31px; width: 93px; height: 35px; border-radius: 8px; font-size: 2.400px; line-height: 3px; display: block; padding-top: 7px; }
.tb-n { left: 60px; top: 69px; width: 32px; height: 11px; font-size: 2.800px; }
.tn-num { font-size: 17px; font-weight: 300; color: #555; line-height: 18px; margin: -3px 0 0 10px; }
.tn-num.cur { color: #d24726; margin: -1px 0 0 6px; }

.gapstrip { height: 2px; background: #f0f0f0; }
.status { height: 22px; background: #d24726; color: #fff; display: flex; align-items: center; font-size: 11px; padding-left: 8px; letter-spacing: -.1px; white-space: nowrap; }
.st-proof { margin-left: 19px; }
.st-lang { margin-left: 18px; }
.st-right { margin-left: auto; display: flex; align-items: center; height: 100%; letter-spacing: -.2px; }
.st-notes { margin-right: 4px; }
.st-l1 { margin-right: 20px; }
.st-comm { margin-right: 3px; }
.views { display: flex; height: 21px; align-self: flex-end; margin: 0 0 0 17px; }
.view { width: 37px; display: flex; align-items: center; justify-content: center; }
.view.on { background: #b93b1c; width: 36px; }
.zm { margin-left: 5px; }
.slider { width: 97px; height: 1px; background: #fff; margin: 0 3px; position: relative; }
.tick { position: absolute; left: 49px; top: -3px; width: 1px; height: 7px; background: #fff; }
.knob { position: absolute; left: 34px; top: -6px; width: 4px; height: 13px; background: #fff; }
.st-zoom { margin-left: 15px; font-size: 12px; }
.st-fit { margin: 0 16px 0 13px; }

.taskbar { height: 40px; background: #0b1016; display: flex; align-items: stretch; color: #fff; }
.tb-left { display: grid; grid-template-columns: 48px 48px 48px 54px 44px 53px 46px 48px; }
.tk { height: 40px; display: flex; align-items: center; justify-content: center; position: relative; }
.tk-ppt { background: #3e4247; margin-left: 2px; width: 48px; border-bottom: 2px solid #76b9ed; }
.tk-chrome::after { content: ""; position: absolute; left: 3px; right: 3px; bottom: 0; height: 2px; background: #76b9ed; }
.tray { margin-left: auto; display: flex; align-items: center; }
.tr-c { margin-left: 21px; }
.tr-s { margin-left: 11px; }
.tr-b { margin-left: 7px; }
.tr-w { margin-left: 11px; }
.tr-v { margin-left: 7px; }
.tr-ime { margin-left: 15px; font: 13px "DejaVu Sans", sans-serif; }
.clock { display: flex; flex-direction: column; align-items: center; width: 60px; margin-left: 17px; font-size: 12px; line-height: 18px; letter-spacing: -.5px; white-space: nowrap; }
.notif { position: relative; margin: -4px 37px 0 17px; width: 16px; height: 14px; display: flex; }
.badge { position: absolute; left: 7px; top: 6px; width: 16px; height: 16px; border-radius: 50%; background: #333; border: 1px solid #888; font-size: 10px; font-weight: 700; display: flex; align-items: center; justify-content: center; color: #fff; }
```
